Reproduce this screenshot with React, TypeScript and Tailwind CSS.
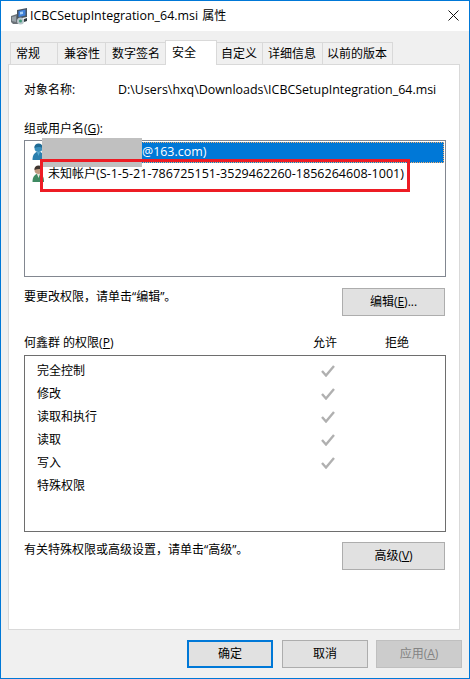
const font = "font-['Segoe_UI','Open_Sans','Noto_Sans_CJK_SC',sans-serif]";
const latin = "text-[12.45px]";

function FileIcon() {
  return (
    <svg width="18" height="18" viewBox="0 0 18 18" className="mr-[2px]">
      <path d="M1 9l6-2 2 2v8H3l-2-2z" fill="#6b7278" />
      <path d="M2 10l4-1v6l-4-1z" fill="#9aa3aa" />
      <path d="M7 3l10-2v9l-10 2z" fill="#4a5560" />
      <path d="M8.500 4l7-1.500v6l-7 1.500z" fill="#3f7fd8" />
      <path d="M10 5l3-.600v2.500l-3 .600z" fill="#a8d0f5" />
      <circle cx="10.500" cy="14" r="3.500" fill="#b9c6cc" />
      <circle cx="10.500" cy="14" r="1.500" fill="#3f9a78" />
      <path d="M14 12l3-1v3l-3 1z" fill="#2e3840" />
    </svg>
  );
}

function UserIcon({ dark }: { dark?: boolean }) {
  const body = dark ? "#3f8a62" : "#2b7fae";
  const head = dark ? "#c09a80" : "#3a8fbc";
  const hair = dark ? "#3e3530" : "#1f6a94";
  return (
    <svg width="16" height="18" viewBox="0 0 16 18">
      <path d="M0.500 17c0-5 2-7 4-8h4c2 1 3.500 3 3.500 8z" fill={body} />
      <path d="M5 9l1.500 4L8 9z" fill={dark ? "#e8e8e0" : "#5aa8d0"} />
      <circle cx="6.500" cy="5" r="4" fill={head} />
      <path d="M2.500 5c-.300-3 1.500-4.500 4-4.500s4.300 1.500 4 4.500C9 3.500 5 3.500 2.500 5z" fill={hair} />
    </svg>
  );
}

function Check() {
  return (
    <svg width="14" height="12" viewBox="0 0 14 12" fill="none" stroke="#b0b0b0" strokeWidth="2.400">
      <path d="M1 6l4 4.500L13 1" />
    </svg>
  );
}

function WinButton({ children, className = "" }: { children: React.ReactNode; className?: string }) {
  return (
    <div className={"h-7 flex items-center justify-center text-xs " + className}>
      {children}
    </div>
  );
}

const tabsLeft = [
  { name: "常规", w: "w-[48px] pl-[5px]" },
  { name: "兼容性", w: "w-[49px] pl-[6px]" },
  { name: "数字签名", w: "w-[61px] pl-[6px]" },
];
const tabsRight = [
  { name: "自定义", w: "w-[47px] pl-[4px]" },
  { name: "详细信息", w: "w-[61px] pl-[5px]" },
  { name: "以前的版本", w: "w-[71px] pl-[4px]" },
];

const perms = [
  { name: "完全控制", on: true },
  { name: "修改", on: true },
  { name: "读取和执行", on: true },
  { name: "读取", on: true },
  { name: "写入", on: true },
  { name: "特殊权限", on: false },
];

function Tab({ name, w }: { name: string; w: string }) {
  return (
    <div className={w + " h-[22px] -mr-px bg-[#f0f0f0] border border-b-0 border-[#d9d9d9] flex items-center text-xs"}>
      {name}
    </div>
  );
}

export default function App() {
  return (
    <div className={font + " relative w-[470px] h-[679px] bg-[#f0f0f0] border border-[#0078d7] flex flex-col text-xs text-black overflow-hidden"}>
      <div className="h-[30px] bg-white flex items-center pl-[9px] pr-[10px] shrink-0">
        <FileIcon />
        <span className={latin}>ICBCSetupIntegration_64.msi</span>
        <span className="ml-[4px]">属性</span>
        <svg width="11" height="11" viewBox="0 0 11 11" className="ml-auto mb-[2px]" stroke="#111" strokeWidth="1" fill="none">
          <path d="M0.500 0.500l10 10M10.500 0.500l-10 10" />
        </svg>
      </div>

      <div className="flex items-end h-[33px] pl-[9px] shrink-0">
        {tabsLeft.map((t) => <Tab key={t.name} {...t} />)}
        <div className="relative z-10 w-[52px] h-[25px] -mb-px -mr-px pl-[6px] bg-white border border-b-0 border-[#d9d9d9] flex items-center text-xs">
          安全
        </div>
        {tabsRight.map((t) => <Tab key={t.name} {...t} />)}
      </div>

      <div className="mx-[7px] w-[452px] h-[566px] bg-white border border-[#d9d9d9] px-[15px] shrink-0 flex flex-col">
        <div className="flex mt-[16px] h-[17px] items-center">
          <span className="w-[94px]">对象名称:</span>
          <span className={latin + " mt-px"}>D:\Users\hxq\Downloads\ICBCSetupIntegration_64.msi</span>
        </div>

        <div className="mt-[22px] h-[17px] flex items-center">组或用户名(<span className="underline">G</span>):</div>
        <div className="mt-[3px] w-[422px] h-[137px] border border-[#828790] p-px">
          <div className="h-[21px] ml-[16px] bg-[#0078d7] border border-dotted border-[#f5b070] text-white flex items-center">
            <span className={latin + " ml-[99px]"}>@163.com)</span>
          </div>
          <div className="h-[22px] flex items-center pl-[6px]">
            <UserIcon dark />
            <span>未知帐户<span className="text-[12.55px]">(S-1-5-21-786725151-3529462260-1856264608-1001)</span></span>
          </div>
        </div>

        <div className="flex justify-between mt-[11px] h-[28px] w-[421px]">
          <span className="mt-px">要更改权限，请单击“编辑”。</span>
          <WinButton className="w-[103px] bg-[#e1e1e1] border border-[#adadad]">编辑(<span className="underline">E</span>)...</WinButton>
        </div>

        <div className="flex items-center mt-[18px] h-[17px]">
          <span className="w-[289px]">何鑫群 的权限(<span className="underline">P</span>)</span>
          <span className="w-[72px]">允许</span>
          <span>拒绝</span>
        </div>
        <div className="mt-[4px] w-[422px] h-[177px] border border-[#6e6e6e] pt-[3px]">
          {perms.map((p) => (
            <div key={p.name} className="h-[23px] flex items-center pl-[12px]">
              <span className="w-[284px]">{p.name}</span>
              {p.on && <Check />}
            </div>
          ))}
        </div>

        <div className="flex justify-between mt-[10px] h-[28px] w-[421px]">
          <span>有关特殊权限或高级设置，请单击“高级”。</span>
          <WinButton className="w-[103px] bg-[#e1e1e1] border border-[#adadad]">高级(<span className="underline">V</span>)</WinButton>
        </div>
      </div>

      <div className="flex justify-end gap-2 mt-[10px] pr-[7px]">
        <WinButton className="w-[86px] mr-px bg-[#e1e1e1] border-2 border-[#0078d7]">确定</WinButton>
        <WinButton className="w-[86px] bg-[#e1e1e1] border border-[#adadad]">取消</WinButton>
        <WinButton className="w-[86px] bg-[#cccccc] border border-[#bfbfbf] text-[#838383]">应用(<span className="underline">A</span>)</WinButton>
      </div>

      {/* user icon under the redaction, redaction and red annotation sit over the list */}
      <div className="absolute left-[31px] top-[142px]"><UserIcon /></div>
      <div className="absolute left-[41px] top-[137px] w-[100px] h-[29px] bg-[#c0c0c0]" />
      <div className="absolute left-[39px] top-[158px] w-[370px] h-[33px] border-[3px] border-[#ed1c24]" />
    </div>
  );
}
